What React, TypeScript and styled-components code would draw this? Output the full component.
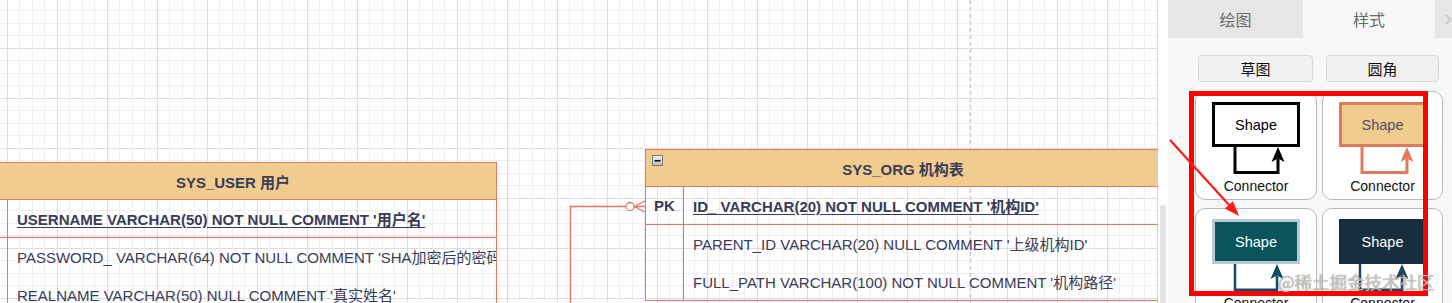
import React from 'react';
import styled, { createGlobalStyle } from 'styled-components';

const GlobalStyle = createGlobalStyle`
  html, body { margin: 0; padding: 0; background: #fff; }
  body { font-family: "Liberation Sans", "Noto Sans CJK SC", sans-serif; }
  #root { width: 1452px; height: 303px; }
`;

const INK = '#393C56';
const SALMON = '#E07A5F';
const SAND = '#F2CC8F';
const UI_FONT = '"Liberation Sans", "Noto Sans CJK SC", sans-serif';

const Screen = styled.div`
  position: relative;
  display: flex;
  width: 1452px;
  height: 303px;
  overflow: hidden;
  font-family: ${UI_FONT};
`;

/* ---------- canvas ---------- */

const Viewport = styled.div`
  position: relative;
  flex: 0 0 1158px;
  overflow: hidden;
  background-color: #fff;
  background-image:
    linear-gradient(to right, #dcdcdc 0 1px, transparent 1px 12px, #f0f0f0 12px 13px, transparent 13px 25px, #f0f0f0 25px 26px, transparent 26px 37px, #f0f0f0 37px 38px, transparent 38px),
    linear-gradient(to bottom, #dcdcdc 0 1px, transparent 1px 12px, #f0f0f0 12px 13px, transparent 13px 25px, #f0f0f0 25px 26px, transparent 26px 37px, #f0f0f0 37px 38px, transparent 38px);
  background-size: 50px 50px;
  background-position: 7px 48px;
`;

const PageBreak = styled.div`
  position: absolute;
  left: 970px;
  top: 0;
  width: 1px;
  height: 100%;
  background: repeating-linear-gradient(to bottom, #c4c4c4 0 4px, transparent 4px 7px);
`;

const ScrollTrack = styled.div`
  flex: 0 0 10px;
  background: #fff;
  display: flex;
  flex-direction: column;
  padding: 205px 0 0 2px;
  box-sizing: border-box;
`;

const ScrollThumb = styled.div`
  width: 6px;
  flex: 1;
  background: #e4e4e4;
  border-radius: 3px 3px 0 0;
`;

const TableBox = styled.div<{ $left: number; $top: number; $width: number }>`
  position: absolute;
  left: ${p => p.$left}px;
  top: ${p => p.$top}px;
  width: ${p => p.$width}px;
  box-sizing: border-box;
  border: 1px solid ${SALMON};
  overflow: hidden;
  color: ${INK};
  font-size: 15px;
  font-family: ${UI_FONT};
`;

const TableHeader = styled.div`
  position: relative;
  height: 37px;
  box-sizing: border-box;
  background: ${SAND};
  border-bottom: 1px solid ${SALMON};
  display: flex;
  align-items: center;
  justify-content: center;
  font-weight: bold;
  white-space: nowrap;
`;

const CollapseIcon = styled.svg`
  position: absolute;
  left: 6px;
  top: 5px;
`;

const TableRow = styled.div<{ $pk?: boolean }>`
  display: grid;
  grid-template-columns: 38px 1fr;
  height: ${p => (p.$pk ? 38 : 37.5)}px;
  box-sizing: border-box;
  border-bottom: ${p => (p.$pk ? `1px solid ${SALMON}` : 'none')};
`;

const KeyCell = styled.div`
  border-right: 1px solid ${SALMON};
  display: flex;
  align-items: center;
  justify-content: center;
  font-weight: bold;
`;

const FieldCell = styled.div<{ $pk?: boolean }>`
  display: flex;
  align-items: center;
  padding-left: 9px;
  white-space: nowrap;
  overflow: hidden;
  font-weight: ${p => (p.$pk ? 'bold' : 'normal')};
  text-decoration: ${p => (p.$pk ? 'underline' : 'none')};
  text-underline-offset: 2px;
`;

const Overlay = styled.svg`
  position: absolute;
  left: 0;
  top: 0;
  pointer-events: none;
`;

type Field = { key?: string; text: string; pk?: boolean };

const ErTable: React.FC<{
  left: number;
  top: number;
  width: number;
  title: string;
  collapsible?: boolean;
  fields: Field[];
}> = ({ left, top, width, title, collapsible, fields }) => (
  <TableBox $left={left} $top={top} $width={width}>
    <TableHeader>
      {collapsible && (
        <CollapseIcon width="11" height="11" viewBox="0 0 11 11">
          <defs>
            <linearGradient id="cg" x1="0" y1="0" x2="0" y2="1">
              <stop offset="0" stopColor="#f4f4f4" />
              <stop offset="1" stopColor="#bdbdbd" />
            </linearGradient>
          </defs>
          <rect x="0.5" y="0.5" width="10" height="10" fill="url(#cg)" stroke="#7a7a7a" />
          <rect x="2.5" y="5" width="6" height="1.6" fill="#111" />
        </CollapseIcon>
      )}
      {title}
    </TableHeader>
    {fields.map((f, i) => (
      <TableRow key={i} $pk={f.pk}>
        <KeyCell>{f.key}</KeyCell>
        <FieldCell $pk={f.pk}>{f.text}</FieldCell>
      </TableRow>
    ))}
  </TableBox>
);

/* ---------- side panel ---------- */

const Sidebar = styled.aside`
  position: relative;
  flex: 0 0 284px;
  background: #f7f7f7;
  display: flex;
  flex-direction: column;
  & > * { flex-shrink: 0; }
`;

const TabBar = styled.div`
  display: flex;
  height: 38px;
`;

const Tab = styled.div<{ $active?: boolean; $width: number }>`
  flex: 0 0 ${p => p.$width}px;
  display: flex;
  align-items: center;
  justify-content: ${p => (p.$width < 40 ? 'flex-start' : 'center')};
  padding-left: ${p => (p.$width < 40 ? 10 : 0)}px;
  box-sizing: border-box;
  background: ${p => (p.$active ? '#f7f7f7' : '#e6e6e6')};
  color: #6a6a6a;
  font-size: 16px;
  font-family: "Noto Sans CJK SC", sans-serif;
`;

const ButtonRow = styled.div`
  display: flex;
  gap: 13px;
  padding: 17px 0 0 30px;
`;

const PanelButton = styled.div<{ $width: number }>`
  width: ${p => p.$width}px;
  height: 27px;
  box-sizing: border-box;
  border: 1px solid #d8d8d8;
  border-radius: 4px;
  background: #f1f1f1;
  display: flex;
  align-items: center;
  justify-content: center;
  font-size: 15px;
  color: #111;
  font-family: "Noto Sans CJK SC", sans-serif;
`;

const StyleGrid = styled.div`
  display: grid;
  grid-template-columns: 122px 121px;
  grid-auto-rows: 109px;
  column-gap: 5px;
  row-gap: 8px;
  padding: 9px 0 0 27px;
`;

const StyleCell = styled.div`
  box-sizing: border-box;
  background: #fff;
  border: 1px solid #b9b9b9;
  border-radius: 10px;
  display: flex;
  flex-direction: column;
  align-items: center;
  padding-top: 10px;
`;

const ShapeBox = styled.div<{ $fill: string; $stroke: string; $text: string }>`
  width: 88px;
  height: 45px;
  flex-shrink: 0;
  box-sizing: border-box;
  border: 3px solid ${p => p.$stroke};
  background: ${p => p.$fill};
  color: ${p => p.$text};
  display: flex;
  align-items: center;
  justify-content: center;
  font-size: 14.5px;
  font-family: "Liberation Sans", sans-serif;
`;

const ConnectorArt = styled.svg`
  display: block;
  flex-shrink: 0;
  overflow: visible;
`;

const ConnectorLabel = styled.div`
  margin-top: 4px;
  flex-shrink: 0;
  font-size: 14px;
  line-height: 16px;
  color: #111;
  font-family: "Liberation Sans", sans-serif;
`;

const RedFrame = styled.div`
  position: absolute;
  left: 21px;
  top: 91px;
  width: 239px;
  height: 205px;
  box-sizing: border-box;
  border: 5px solid #ff0000;
  pointer-events: none;
`;

const Watermark = styled.div`
  position: absolute;
  left: 1278px;
  top: 270px;
  font-size: 17.5px;
  line-height: 24px;
  font-family: "Noto Sans CJK SC", sans-serif;
  color: rgba(215, 215, 215, 0.8);
  text-shadow: 0 0 1px rgba(70, 70, 70, 0.75);
  white-space: nowrap;
  pointer-events: none;
`;

type StyleSpec = { fill: string; stroke: string; text: string; line: string; width: number; left: number; right: number };

const styles: StyleSpec[] = [
  { fill: '#ffffff', stroke: '#000000', text: '#000000', line: '#000000', width: 3, left: 23, right: 66 },
  { fill: SAND, stroke: SALMON, text: '#4e4f63', line: SALMON, width: 3, left: 23, right: 68 },
  { fill: '#09555B', stroke: '#BAC8D3', text: '#ffffff', line: '#0B4D6A', width: 2.5, left: 23, right: 65 },
  { fill: '#182E3E', stroke: '#182E3E', text: '#ffffff', line: '#23445D', width: 2.5, left: 21, right: 63 },
];

const StylePreview: React.FC<{ s: StyleSpec }> = ({ s }) => (
  <StyleCell>
    <ShapeBox $fill={s.fill} $stroke={s.stroke} $text={s.text}>Shape</ShapeBox>
    <ConnectorArt width="88" height="27" viewBox="0 0 88 27">
      <path
        d={`M${s.left} 0 V${27 - s.width / 2} H${s.right} V12`}
        fill="none"
        stroke={s.line}
        strokeWidth={s.width}
      />
      <polygon
        points={`${s.right},0 ${s.right + 6.5},15 ${s.right},11.5 ${s.right - 6.5},15`}
        fill={s.line}
      />
    </ConnectorArt>
    <ConnectorLabel>Connector</ConnectorLabel>
  </StyleCell>
);

export default function App() {
  return (
    <>
      <GlobalStyle />
      <Screen>
        <Viewport>
          <PageBreak />
          <ErTable
            left={-31}
            top={162}
            width={528}
            title="SYS_USER 用户"
            fields={[
              { key: 'PK', text: "USERNAME VARCHAR(50) NOT NULL COMMENT '用户名'", pk: true },
              { text: "PASSWORD_ VARCHAR(64) NOT NULL COMMENT 'SHA加密后的密码'" },
              { text: "REALNAME VARCHAR(50) NULL COMMENT '真实姓名'" },
            ]}
          />
          <ErTable
            left={645}
            top={149}
            width={516}
            title="SYS_ORG 机构表"
            collapsible
            fields={[
              { key: 'PK', text: "ID_ VARCHAR(20) NOT NULL COMMENT '机构ID'", pk: true },
              { text: "PARENT_ID VARCHAR(20) NULL COMMENT '上级机构ID'" },
              { text: "FULL_PATH VARCHAR(100) NOT NULL COMMENT '机构路径'" },
            ]}
          />
          <Overlay width="1158" height="303" viewBox="0 0 1158 303">
            <path d="M570.5 303 V206.5 H626" fill="none" stroke={SALMON} strokeWidth="1.3" />
            <circle cx="630" cy="206.5" r="4" fill="#fff" stroke={SALMON} strokeWidth="1.3" />
            <path d="M634 206.5 L645 201 M634 206.5 H645 M634 206.5 L645 212" fill="none" stroke={SALMON} strokeWidth="1.3" />
          </Overlay>
        </Viewport>
        <ScrollTrack>
          <ScrollThumb />
        </ScrollTrack>
        <Sidebar>
          <TabBar>
            <Tab $width={135}>绘图</Tab>
            <Tab $width={132} $active>样式</Tab>
            <Tab $width={17}>
              <svg width="7" height="11" viewBox="0 0 7 11">
                <path d="M1 1 L5.5 5.5 L1 10" fill="none" stroke="#c4c4c4" strokeWidth="1.6" />
              </svg>
            </Tab>
          </TabBar>
          <ButtonRow>
            <PanelButton $width={115}>草图</PanelButton>
            <PanelButton $width={113}>圆角</PanelButton>
          </ButtonRow>
          <StyleGrid>
            {styles.map((s, i) => (
              <StylePreview key={i} s={s} />
            ))}
          </StyleGrid>
          <RedFrame />
          <Overlay width="284" height="303" viewBox="0 0 284 303">
            <line x1="2" y1="140" x2="61.5" y2="205.5" stroke="#ff1a1a" strokeWidth="2.2" />
            <polygon points="71,216 56.8,208.6 65,201.2" fill="#ff1a1a" />
          </Overlay>
        </Sidebar>
        <Watermark>@稀土掘金技术社区</Watermark>
      </Screen>
    </>
  );
}
